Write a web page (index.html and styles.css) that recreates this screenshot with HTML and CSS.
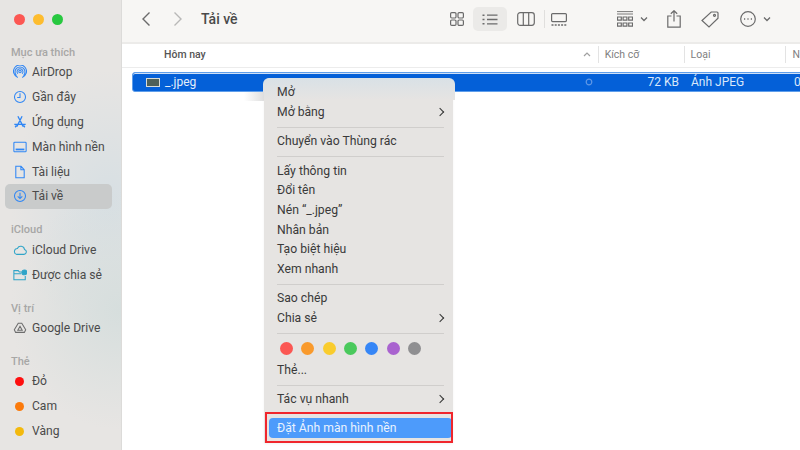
FILE: index.html
```html
<!DOCTYPE html>
<html lang="vi">
<head>
    <meta charset="UTF-8">
    <title>Tải về</title>
    <link rel="stylesheet" href="styles.css">
</head>
<body>
<div class="ventana">
    <aside class="lateral">
        <div class="semaforo">
            <span class="luz rojo"></span>
            <span class="luz ambar"></span>
            <span class="luz verde"></span>
        </div>
        <div class="seccion primera">Mục ưa thích</div>
        <div class="item">
            <svg class="ico" viewBox="0 0 16 16"><circle cx="8" cy="7.5" r="1.4"/><path d="M5.6 10a3.4 3.4 0 1 1 4.8 0M4 12a5.700 5.700 0 1 1 8 0M5.500 14.200a7.400 7.400 0 1 1 5 0"/></svg>
            AirDrop
        </div>
        <div class="item">
            <svg class="ico" viewBox="0 0 16 16"><circle cx="8" cy="8" r="6.3"/><path d="M8 3.800V8.600H4.800"/></svg>
            Gần đây
        </div>
        <div class="item">
            <svg class="ico" viewBox="0 0 16 16"><path d="M5.600 1.500 11.500 13M10.400 1.500 4.500 13M1.500 10.800h13M2.500 14l1.400-2M13.500 14l-1.400-2" stroke-width="1.500"/></svg>
            Ứng dụng
        </div>
        <div class="item">
            <svg class="ico" viewBox="0 0 16 16"><rect x="1" y="2.500" width="14" height="11" rx="1"/><path d="M3 10.800h10" stroke-width="2"/></svg>
            Màn hình nền
        </div>
        <div class="item">
            <svg class="ico" viewBox="0 0 16 16"><path d="M3.200 1.500h6l3.600 3.800v9.200H3.200zM9 1.500v4h3.800"/></svg>
            Tài liệu
        </div>
        <div class="item activo">
            <svg class="ico" viewBox="0 0 16 16"><circle cx="8" cy="8" r="6.300"/><path d="M8 4.300v6.600M5.400 8.500 8 11l2.600-2.500"/></svg>
            Tải về
        </div>
        <div class="seccion">iCloud</div>
        <div class="item">
            <svg class="ico cian" viewBox="0 0 16 16"><path d="M4 13h8.600a2.900 2.900 0 0 0 .5-5.700A4.300 4.300 0 0 0 5 6.200 3.500 3.500 0 0 0 4 13z"/></svg>
            iCloud Drive
        </div>
        <div class="item">
            <svg class="ico cian" viewBox="0 0 16 16"><path d="M1 5V13.500H14V9M1 5V3h5l1.200 1.600H10M1 6.500h8.500"/><circle class="relleno" cx="13" cy="5" r="2.800"/></svg>
            Được chia sẻ
        </div>
        <div class="seccion">Vị trí</div>
        <div class="item">
            <svg class="ico gris" viewBox="0 0 16 16"><path d="M6 2.500h4l4.500 7.500-1.500 3H3l-1.500-3z"/><path d="M8 6l2.500 4.500h-5z"/></svg>
            Google Drive
        </div>
        <div class="seccion">Thẻ</div>
        <div class="item"><span class="punto p-rojo"></span>Đỏ</div>
        <div class="item"><span class="punto p-naranja"></span>Cam</div>
        <div class="item"><span class="punto p-amarillo"></span>Vàng</div>
    </aside>

    <main class="contenido">
        <header class="barra">
            <svg class="flecha" viewBox="0 0 12 16"><path d="M9.500 1.500 3 8l6.500 6.500"/></svg>
            <svg class="flecha apagada" viewBox="0 0 12 16"><path d="M2.500 1.500 9 8l-6.500 6.500"/></svg>
            <div class="titulo">Tải về</div>
            <div class="vistas">
                <svg class="cuad" viewBox="0 0 14 14"><rect x=".6" y=".6" width="5.400" height="5.400" rx="1.200"/><rect x="8" y=".6" width="5.400" height="5.400" rx="1.200"/><rect x=".6" y="8" width="5.400" height="5.400" rx="1.200"/><rect x="8" y="8" width="5.400" height="5.400" rx="1.200"/></svg>
                <span class="bt-activo">
                    <svg class="lista" viewBox="0 0 16 11"><path d="M5 1.200H15.500M5 5.500H15.500M5 9.800H15.500" stroke-width="1.300"/><path d="M.5 1.200h2M.5 5.500h2M.5 9.800h2" stroke-width="1.600"/></svg>
                </span>
                <svg class="columnas" viewBox="0 0 18 14"><rect x=".7" y=".7" width="16.600" height="12.600" rx="2.500"/><path d="M6.300 1v12M11.700 1v12"/></svg>
                <span class="raya"></span>
                <svg class="galeria" viewBox="0 0 16 13"><rect x=".6" y=".6" width="14.800" height="8" rx="1"/><path d="M.5 12h15" stroke-dasharray="2 1.200" stroke-width="1.500"/></svg>
            </div>
            <div class="acciones">
                <svg class="grupo" viewBox="0 0 16 16"><path d="M0 .6h16M0 3h16" stroke-width=".9"/><path d="M.5 6h3.800v3.200H.5zM6.100 6h3.800v3.200H6.100zM11.700 6h3.800v3.200h-3.800zM.5 12h3.800v3.200H.5zM6.100 12h3.800v3.200H6.100zM11.700 12h3.800v3.200h-3.800z"/></svg>
                <svg class="chev" viewBox="0 0 8 6"><path d="M1 1.500l3 3 3-3"/></svg>
                <svg class="compartir" viewBox="0 0 14 18"><path d="M4.500 6H.8v11.200h12.400V6H9.500M7 11.500V.8M3.800 3.800 7 .7l3.200 3.100"/></svg>
                <svg class="etiqueta" viewBox="0 0 18 17"><path d="M10.200 1h5.800a1 1 0 0 1 1 1v5.300L8 16 1 9.500z"/><circle cx="13.500" cy="4.300" r="1"/></svg>
                <svg class="mas" viewBox="0 0 16 16"><circle cx="8" cy="8" r="7.300"/><path d="M4 8h1.200M7.400 8h1.200M10.800 8H12" stroke-width="1.500"/></svg>
                <svg class="chev" viewBox="0 0 8 6"><path d="M1 1.500l3 3 3-3"/></svg>
            </div>
        </header>
        <div class="cabecera">
            <div class="col-nombre">Hôm nay</div>
            <svg class="orden" viewBox="0 0 8 5"><path d="M1 4l3-3 3 3"/></svg>
            <div class="col-tam">Kích cỡ</div>
            <div class="col-tipo">Loại</div>
            <div class="col-fecha">N</div>
        </div>
        <div class="fila">
            <svg class="miniatura" viewBox="0 0 14 9"><rect width="14" height="9" fill="#d8dcd8"/><rect x="1" y="1" width="12" height="7" fill="#4e6058"/></svg>
            <div class="fila-nombre">_.jpeg</div>
            <svg class="sync" viewBox="0 0 8 8"><circle cx="4" cy="4" r="2.800"/></svg>
            <div class="fila-tam">72 KB</div>
            <div class="fila-tipo">Ảnh JPEG</div>
            <div class="fila-fecha">0</div>
        </div>
    </main>

    <nav class="menu">
        <div class="op">Mở</div>
        <div class="op">Mở bằng <span class="mas-op"></span></div>
        <hr>
        <div class="op">Chuyển vào Thùng rác</div>
        <hr>
        <div class="op">Lấy thông tin</div>
        <div class="op">Đổi tên</div>
        <div class="op">Nén “_.jpeg”</div>
        <div class="op">Nhân bản</div>
        <div class="op">Tạo biệt hiệu</div>
        <div class="op">Xem nhanh</div>
        <hr>
        <div class="op">Sao chép</div>
        <div class="op">Chia sẻ <span class="mas-op"></span></div>
        <hr>
        <div class="colores">
            <span class="c c1"></span><span class="c c2"></span><span class="c c3"></span><span class="c c4"></span><span class="c c5"></span><span class="c c6"></span><span class="c c7"></span>
        </div>
        <div class="op">Thẻ...</div>
        <hr>
        <div class="op">Tác vụ nhanh <span class="mas-op"></span></div>
        <div class="op marcada">Đặt Ảnh màn hình nền</div>
    </nav>
    <div class="recuadro"></div>
</div>
</body>
</html>
```

FILE: styles.css
```css
html, body {
    margin: 0;
    padding: 0;
}
body {
    font-family: Roboto, "Liberation Sans", sans-serif;
    color: #3c3c3c;
}
svg {
    fill: none;
    stroke: currentColor;
    stroke-width: 1.2;
    flex: none;
}
.ventana {
    position: relative;
    width: 800px;
    height: 450px;
    overflow: hidden;
    display: flex;
    background: #fff;
}

/* barra lateral */
.lateral {
    width: 122px;
    flex: none;
    box-sizing: border-box;
    padding: 0 9px 0 5px;
    background:
        radial-gradient(ellipse 110px 120px at 120px 310px, #d6dedd 0%, rgba(214, 222, 221, 0) 100%),
        radial-gradient(ellipse 100px 130px at 110px 200px, #d7dfe3 0%, rgba(215, 223, 227, 0) 100%),
        #e7e5e3;
    border-right: 1px solid #dcdbd9;
}
.semaforo {
    display: flex;
    gap: 8px;
    padding: 14px 0 0 9px;
    height: 23px;
}
.luz {
    width: 11px;
    height: 11px;
    border-radius: 50%;
}
.rojo { background: #fc5753; }
.ambar { background: #fdbc2e; }
.verde { background: #28c840; }
.seccion {
    font-size: 11px;
    font-weight: 500;
    color: #a7a7a6;
    line-height: 14px;
    padding: 14.5px 0 0 6px;
}
.seccion.primera {
    padding-top: 8.5px;
}
.item {
    display: flex;
    align-items: center;
    gap: 5px;
    height: 24.9px;
    font-size: 12.1px;
    padding-left: 8px;
    border-radius: 5px;
    color: #4a4a4a;
}
.activo {
    background: #c9cbcb;
}
.ico {
    width: 14px;
    height: 14px;
    color: #2f86f5;
}
.ico.cian { color: #2fa4c8; }
.ico.gris { color: #6d6d6d; }
.relleno { fill: #2fa4c8; }
.punto {
    width: 9px;
    height: 9px;
    border-radius: 50%;
    margin: 0 3px 0 2px;
}
.p-rojo { background: #fe0f0f; }
.p-naranja { background: #fb7a0c; }
.p-amarillo { background: #f3b90d; }

/* contenido */
.contenido {
    flex: 1;
    min-width: 0;
}
.barra {
    height: 38px;
    padding-bottom: 4px;
    display: flex;
    align-items: center;
    background: #f7f6f4;
    border-bottom: 2px solid #ecebe9;
    color: #6b6b6b;
}
.flecha {
    width: 12px;
    height: 16px;
    margin-left: 18px;
    stroke-width: 1.4;
}
.flecha.apagada {
    margin-left: 20px;
    color: #b8b8b7;
}
.titulo {
    font-size: 14px;
    font-weight: 500;
    color: #4a4a4a;
    margin-left: 17px;
    width: 249px;
}
.vistas {
    display: flex;
    align-items: center;
}
.cuad { width: 14px; height: 14px; }
.bt-activo {
    display: flex;
    align-items: center;
    justify-content: center;
    width: 34px;
    height: 24px;
    border-radius: 5px;
    background: #ebeae8;
    margin: 0 10px 0 9px;
}
.lista { width: 16px; height: 11px; }
.columnas { width: 18px; height: 14px; }
.raya {
    width: 1px;
    height: 18px;
    background: #e0dfdd;
    margin: 0 6px 0 9px;
}
.galeria { width: 16px; height: 13px; }
.acciones {
    display: flex;
    align-items: center;
    margin-left: 50px;
}
.grupo { width: 16px; height: 16px; }
.chev {
    width: 8px;
    height: 6px;
    margin-left: 7px;
    stroke-width: 1.3;
}
.compartir { width: 14px; height: 18px; margin-left: 19px; }
.etiqueta { width: 18px; height: 17px; margin-left: 20px; }
.mas { width: 16px; height: 16px; margin-left: 21px; }
.cabecera {
    display: flex;
    align-items: center;
    height: 21px;
    padding-bottom: 2px;
    font-size: 10.5px;
    color: #808080;
    border-bottom: 1px solid #ececec;
}
.col-nombre {
    width: 420px;
    padding-left: 42px;
    box-sizing: border-box;
    font-weight: 500;
    color: #555;
}
.orden {
    width: 8px;
    height: 5px;
    margin-left: 41px;
    color: #a0a0a0;
}
.col-tam, .col-tipo, .col-fecha {
    border-left: 1px solid #e3e3e3;
    height: 17px;
    line-height: 17px;
    box-sizing: border-box;
    padding-left: 6px;
}
.col-tam { width: 86px; margin-left: 7px; }
.col-tipo { width: 102px; }
.col-fecha { flex: 1; }
.fila {
    display: flex;
    align-items: center;
    height: 18px;
    margin: 4px -20px 0 10px;
    background: #0460d8;
    border: 1px solid #5f9eea;
    box-shadow: inset 0 1px 0 #cfe0f7;
    border-radius: 3px;
    color: #d9e7fa;
    font-size: 12px;
    white-space: nowrap;
}
.miniatura {
    width: 14px;
    height: 9px;
    margin-left: 13px;
    stroke: none;
}
.fila-nombre {
    width: 420px;
    margin-left: 5px;
    color: #e3edfb;
}
.sync {
    width: 8px;
    height: 8px;
    color: #5f97e6;
}
.fila-tam {
    width: 86px;
    text-align: right;
}
.fila-tipo {
    width: 103px;
    margin-left: 12px;
}
.fila-fecha { flex: 1; }

/* menu contextual */
.menu {
    position: absolute;
    z-index: 1;
    left: 264px;
    top: 78px;
    bottom: 7px;
    width: 189px;
    box-sizing: border-box;
    padding: 5px 0 0;
    background: #e6e4e2;
    border-radius: 6px 6px 0 0;
    box-shadow: 0 1px 3px rgba(0, 0, 0, .05);
    font-size: 12.2px;
    color: #3a3a3a;
}
/* la parte de arriba del menu es algo mas ancha y coge el azul de la fila */
.menu::after {
    content: "";
    position: absolute;
    z-index: -1;
    top: 0;
    left: -1px;
    right: -2px;
    height: 22px;
    border-radius: 6px 6px 0 0;
    background: linear-gradient(#d9e1e6, #e6e4e2);
}
.menu::before {
    content: "";
    position: absolute;
    top: 14px;
    left: -20px;
    width: 20px;
    height: 9px;
    background: linear-gradient(to right, rgba(222, 222, 222, 0), #dedede);
}
.op {
    height: 19.6px;
    line-height: 19.6px;
    padding: 0 13px;
    position: relative;
    white-space: nowrap;
}
.mas-op {
    position: absolute;
    right: 10px;
    top: 6px;
    width: 5px;
    height: 5px;
    border-top: 1.5px solid #333;
    border-right: 1.5px solid #333;
    transform: rotate(45deg);
}
.menu hr {
    margin: 4.5px 9px 4.5px 13px;
    height: 1px;
    border: 0;
    background: #d0cecc;
}
.colores {
    display: flex;
    gap: 8.35px;
    padding: 3.5px 16px 5.7px;
}
.c {
    width: 13px;
    height: 13px;
    border-radius: 50%;
}
.c1 { background: #fb5753; }
.c2 { background: #f99a2c; }
.c3 { background: #f9cc2d; }
.c4 { background: #4ac95c; }
.c5 { background: #3686f6; }
.c6 { background: #a963cf; }
.c7 { background: #8f8f91; }
.marcada {
    margin: 8px 1px 0 5px;
    padding: 0 8px;
    height: 20px;
    line-height: 20px;
    border-radius: 4px;
    background: #4d9bfb;
    color: #e9f2fe;
}
.recuadro {
    position: absolute;
    z-index: 2;
    left: 265px;
    top: 412px;
    width: 184px;
    height: 27px;
    border: 2px solid #f0262c;
}
```
